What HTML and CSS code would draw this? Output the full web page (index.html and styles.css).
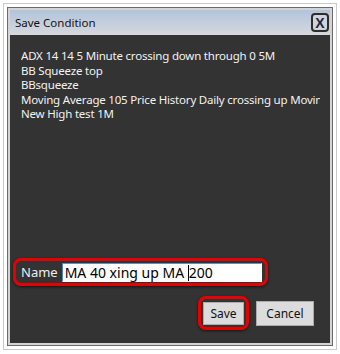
FILE: index.html
```html
<!DOCTYPE html>
<html lang="en">
<head>
    <meta charset="UTF-8">
    <title>Save Condition</title>
    <link rel="stylesheet" href="styles.css">
</head>
<body>

<div class="shot">
    <div class="window">
        <div class="titlebar">
            <span class="title">Save Condition</span>
            <span class="close">X</span>
        </div>
        <div class="content">
            <ul class="list">
                <li>ADX 14 14 5 Minute crossing down through 0 5M</li>
                <li>BB Squeeze top</li>
                <li>BBsqueeze</li>
                <li>Moving Average 105 Price History Daily crossing up Moving Average 200</li>
                <li>New High test 1M</li>
            </ul>

            <div class="mark name-row">
                <label>Name</label>
                <div class="field">MA 40 xing up MA <span class="caret"></span>200</div>
            </div>

            <div class="buttons">
                <div class="mark save-mark">
                    <button>Save</button>
                </div>
                <button class="cancel">Cancel</button>
            </div>
        </div>
    </div>
</div>

</body>
</html>
```

FILE: styles.css
```css
body { margin: 0; background: #fff; font-family: "Noto Sans", "DejaVu Sans", sans-serif; }

.shot {
    box-sizing: border-box;
    margin: 3px 0 0 3px;
    width: 334px;
    height: 347px;
    border: 1px solid #c9c9c9;
    padding: 3px;
    background: #fff;
}
.window {
    box-sizing: border-box;
    height: 100%;
    border: 1px solid #6a6a6a;
    padding: 2px;
    background: #d4d4d4;
    display: flex;
    flex-direction: column;
}
.titlebar {
    height: 25px;
    display: flex;
    align-items: center;
    justify-content: space-between;
    padding: 0 1px 0 5px;
    background: linear-gradient(#b2c4db, #d6d8dd);
}
.title { font-size: 11.5px; color: #111; }
.close {
    box-sizing: border-box;
    width: 18px;
    height: 19px;
    border: 2px solid #2d2d2d;
    border-radius: 4px;
    display: flex;
    align-items: center;
    justify-content: center;
    font-family: "Liberation Sans", sans-serif;
    font-weight: bold;
    font-size: 14px;
    color: #1b2540;
    background: #d0d4da;
}

.content {
    flex: 1;
    background: #333;
    display: flex;
    flex-direction: column;
    padding: 10px 0 13px 3px;
    min-height: 0;
}
.list {
    flex: 1;
    list-style: none;
    margin: 0;
    padding: 4px 10px 0 8px;
    overflow: hidden;
    color: #f2f2f2;
    font-size: 11.5px;
    letter-spacing: -0.2px;
    line-height: 14.5px;
}
.list li { white-space: nowrap; overflow: hidden; }

.mark {
    border: 3px solid #e60000;
    border-radius: 8px;
    box-shadow: 0 1px 3px rgba(0, 0, 0, 0.6);
}
.name-row {
    width: 255px;
    height: 28px;
    box-sizing: border-box;
    display: flex;
    align-items: center;
    padding-left: 5px;
    gap: 4px;
}
.name-row label { color: #eee; font-size: 13px; }
.field {
    box-sizing: border-box;
    width: 200px;
    height: 19px;
    background: #fff;
    border: 1px solid #fff;
    border-left-color: #4a86c0;
    border-top-color: #5b8fc4;
    padding-left: 2px;
    font-size: 14px;
    line-height: 17px;
    color: #000;
    white-space: nowrap;
}
.caret {
    display: inline-block;
    width: 1px;
    height: 16px;
    background: #000;
    vertical-align: -3px;
}

.buttons {
    margin-top: 10px;
    display: flex;
    justify-content: flex-end;
    align-items: center;
    gap: 7px;
    padding-right: 16px;
}
.save-mark { padding: 2px; }
button {
    box-sizing: border-box;
    margin: 0;
    font-family: "Noto Sans", sans-serif;
    font-size: 12px;
    color: #111;
    background: #dcdcdc;
    border: 1px solid #acacac;
    padding: 0;
}
.save-mark button { width: 41px; height: 23px; }
.cancel { width: 58px; height: 25px; }
```
